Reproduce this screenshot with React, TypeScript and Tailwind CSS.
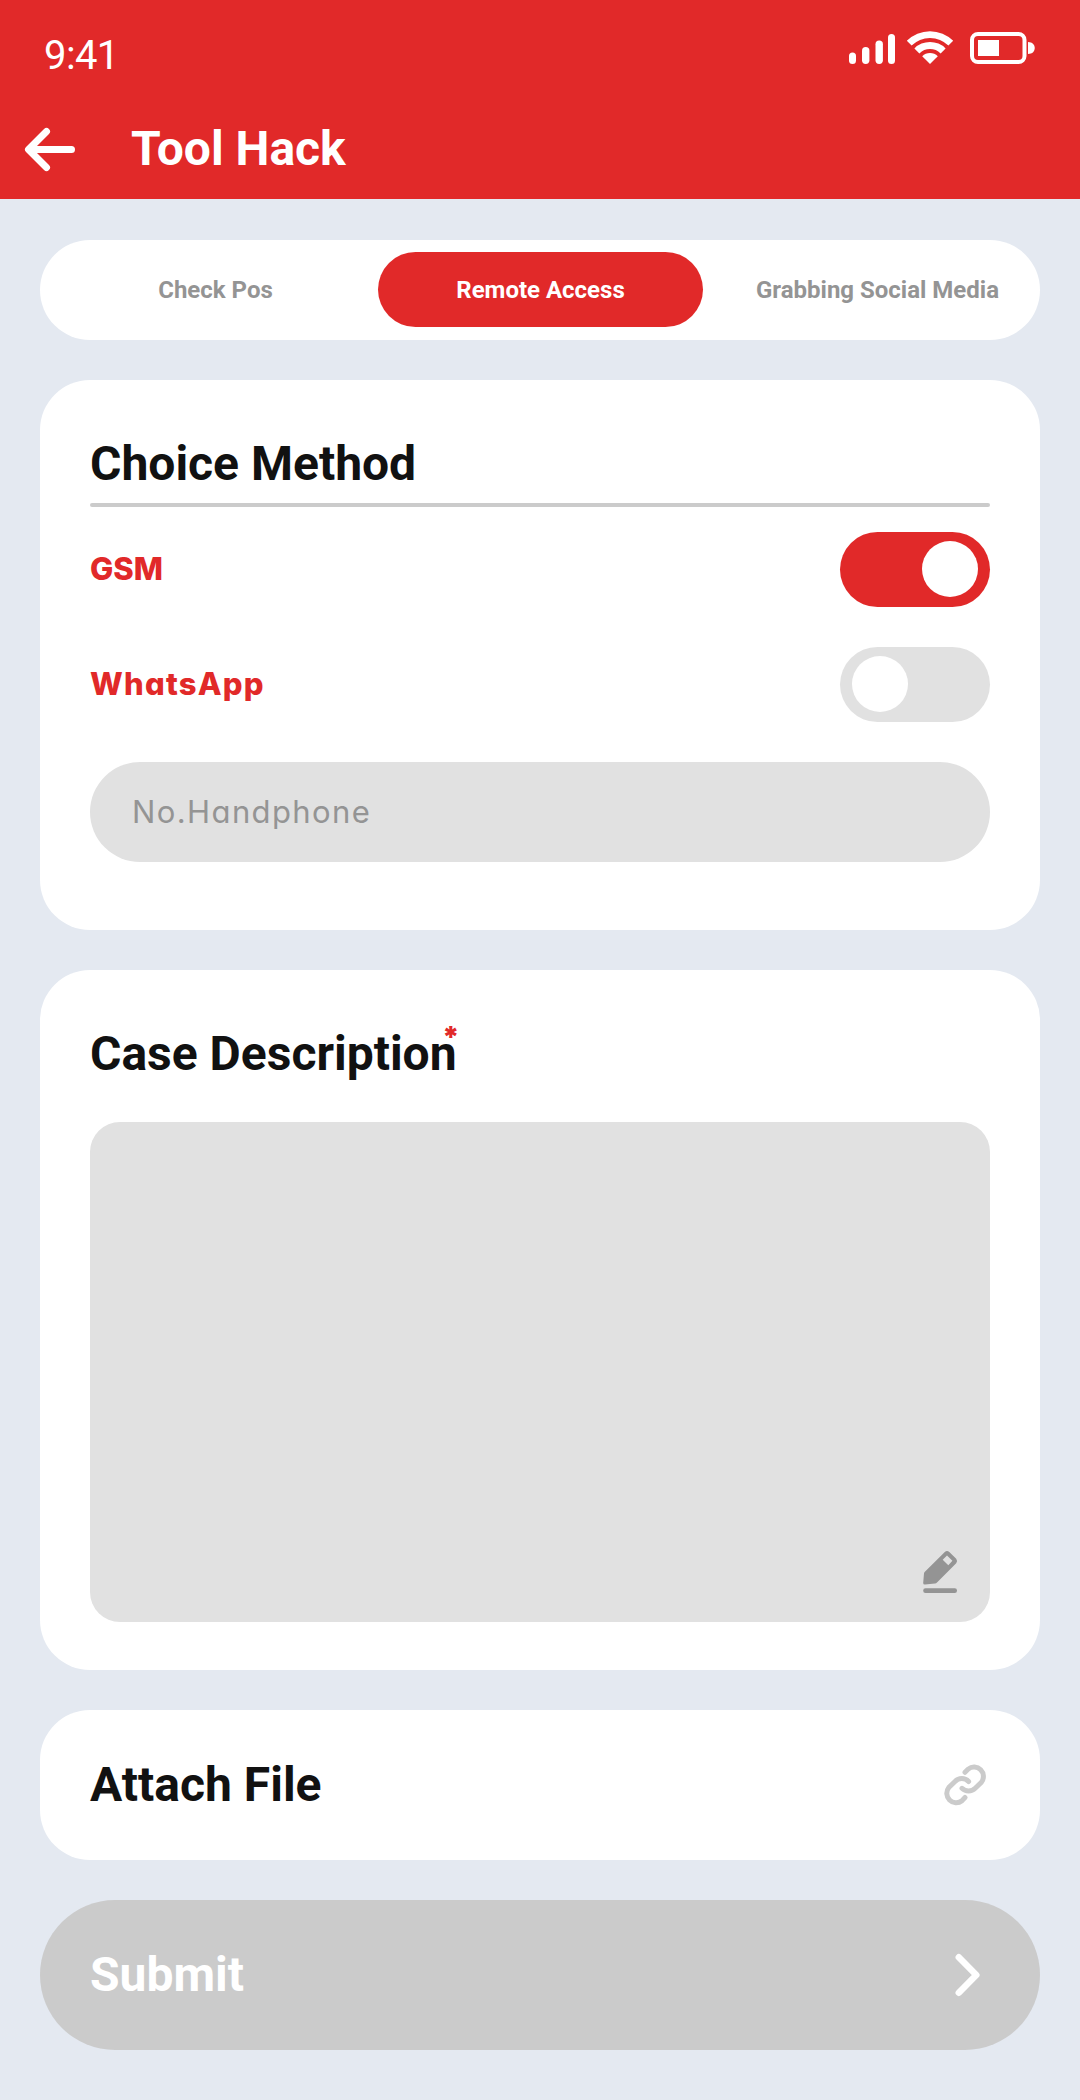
import React, { useState } from "react";

const tabs = [
  { label: "Check Pos", extra: "" },
  { label: "Remote Access", extra: "" },
  { label: "Grabbing Social Media", extra: "ml-3" },
];

function StatusIcons() {
  return (
    <svg width="190" height="36" viewBox="847 30 190 36" fill="#fff">
      <rect x="849" y="52.5" width="7" height="11.5" rx="3.5" />
      <rect x="862" y="47" width="7.4" height="17" rx="3.7" />
      <rect x="875.5" y="40.5" width="7.4" height="23.5" rx="3.7" />
      <rect x="888" y="34" width="7" height="30" rx="3.5" />
      <path d="M906.8 40.8A32.8 32.8 0 0 1 953.2 40.8L948.4 45.6A26 26 0 0 0 911.6 45.6Z" />
      <path d="M914.4 48.4A22 22 0 0 1 945.6 48.4L940.6 53.4A15 15 0 0 0 919.4 53.4Z" />
      <path d="M922.2 56.2A11 11 0 0 1 937.8 56.2L930 64Z" />
      <rect x="972" y="34" width="52.5" height="28" rx="6" fill="none" stroke="#fff" strokeWidth="4" />
      <rect x="978" y="40" width="21" height="16" />
      <path d="M1028 42c9 0 9 12 0 12Z" />
    </svg>
  );
}

function Toggle({ on, onClick, label }: { on: boolean; onClick: () => void; label: string }) {
  return (
    <button
      role="switch"
      aria-checked={on}
      aria-label={label}
      onClick={onClick}
      className={`flex h-[75px] w-[150px] items-center rounded-full px-3 pb-px ${
        on ? "justify-end bg-[#e12929]" : "justify-start bg-[#e1e1e1]"
      }`}
    >
      <span className="size-14 rounded-full bg-white" />
    </button>
  );
}

export default function App() {
  const [active, setActive] = useState(1);
  const [gsm, setGsm] = useState(true);
  const [whatsapp, setWhatsapp] = useState(false);

  return (
    <div className="flex h-[2100px] w-[1080px] flex-col bg-[#e4e9f1] font-['Roboto',sans-serif] text-[#111]">
      <header className="flex h-[199px] flex-col bg-[#e12929] text-white">
        <div className="flex h-[110px] items-start justify-between pt-[30px] pr-[43px] pl-11">
          <span className="mt-[3px] text-[40px] leading-[46px] font-normal tracking-[-0.6px]">9:41</span>
          <StatusIcons />
        </div>
        <div className="flex h-[78px] items-center pl-6">
          <svg className="mt-px" width="52" height="46" viewBox="24 127 52 46" fill="none" stroke="#fff" strokeWidth="7" strokeLinecap="round" strokeLinejoin="round">
            <path d="M71.5 149.5H29M46.5 131.5l-18 18 18 18" />
          </svg>
          <h1 className="ml-[55px] text-5xl leading-[56px] font-bold">Tool Hack</h1>
        </div>
      </header>

      <main className="flex flex-col gap-10 px-10 pt-[41px]">
        <nav className="flex h-[100px] items-center rounded-full bg-white pb-px pl-[13px]">
          {tabs.map((tab, i) => (
            <button
              key={tab.label}
              onClick={() => setActive(i)}
              className={`h-[75px] w-[325px] shrink-0 rounded-full text-2xl font-bold whitespace-nowrap ${tab.extra} ${
                i === active ? "bg-[#e12929] text-white" : "text-[#949494]"
              }`}
            >
              {tab.label}
            </button>
          ))}
        </nav>

        <section className="flex h-[550px] flex-col rounded-[50px] bg-white px-[50px] pt-[56px]">
          <h2 className="text-5xl leading-[56px] font-bold">Choice Method</h2>
          <div className="mt-[11px] h-1 rounded-full bg-[#cbcbcb]" />
          <div className="mt-[25px] flex items-center justify-between">
            <span className="font-['Inter',sans-serif] text-[31px] font-extrabold text-[#e12929] [font-feature-settings:'cv11']">GSM</span>
            <Toggle on={gsm} onClick={() => setGsm(!gsm)} label="GSM" />
          </div>
          <div className="mt-10 flex items-center justify-between">
            <span className="font-['Inter',sans-serif] text-[31px] font-extrabold tracking-[1.2px] text-[#e12929] [font-feature-settings:'cv11']">WhatsApp</span>
            <Toggle on={whatsapp} onClick={() => setWhatsapp(!whatsapp)} label="WhatsApp" />
          </div>
          <input
            placeholder="No.Handphone"
            className="mt-10 h-[100px] w-full rounded-full bg-[#e1e1e1] px-[42px] pb-[2px] font-['Inter',sans-serif] text-[31px] tracking-[1.4px] outline-none [font-feature-settings:'cv11'] placeholder:text-[#949494]"
          />
        </section>

        <section className="flex h-[700px] flex-col rounded-[50px] bg-white px-[50px] pt-[56px]">
          <h2 className="relative self-start text-5xl leading-[56px] font-bold">
            Case Description
            <span className="absolute top-[-3px] right-[-3px] font-['Inter',sans-serif] text-[29px] leading-7 font-black text-[#e12929]">*</span>
          </h2>
          <div className="mt-10 flex h-[500px] items-end justify-end rounded-[30px] bg-[#e1e1e1] pr-8 pb-7">
            <svg width="36" height="44" viewBox="922 1550 36 44" fill="#949494">
              <path
                fillRule="evenodd"
                d="M924.4 1572.2 944.8 1551.9Q947 1550.1 949.3 1551.9L956.2 1558.8Q958 1561.1 956.2 1563.3L937 1582.6Q936.2 1583.4 935 1583.6L925 1584.5Q923.1 1584.6 923.2 1583L924 1573.2ZM947 1555.4 942.7 1559.8 948.3 1565.2 952.4 1560.8Z"
              />
              <rect x="923.2" y="1588.3" width="33.8" height="4.7" rx="2.3" />
            </svg>
          </div>
        </section>

        <section className="flex h-[150px] items-center justify-between rounded-[50px] bg-white px-[50px]">
          <h2 className="text-5xl leading-[56px] font-bold">Attach File</h2>
          <svg className="mr-[2px]" width="46" height="46" viewBox="942 1762 46 46" fill="none" stroke="#cbcbcb" strokeWidth="5" strokeLinecap="round">
            <path d="M965 1772.3 968.2 1769.1A9.4 9.4 0 0 1 981.4 1782.3L975.2 1788.3A9.4 9.4 0 0 1 962 1788.3" />
            <path d="M965 1797.5 962 1800.7A9.4 9.4 0 0 1 948.8 1787.5L955 1781.5A9.4 9.4 0 0 1 968.6 1781.5" />
          </svg>
        </section>

        <button className="flex h-[150px] items-center justify-between rounded-full bg-[#cbcbcb] px-[50px] text-white">
          <span className="text-5xl leading-[56px] font-bold">Submit</span>
          <svg className="mr-[9px]" width="27" height="46" viewBox="954 1952 27 46" fill="none" stroke="#fff" strokeWidth="6.5" strokeLinecap="round" strokeLinejoin="round">
            <path d="M958.8 1957.3 976.3 1975 958.8 1992.7" />
          </svg>
        </button>
      </main>
    </div>
  );
}
